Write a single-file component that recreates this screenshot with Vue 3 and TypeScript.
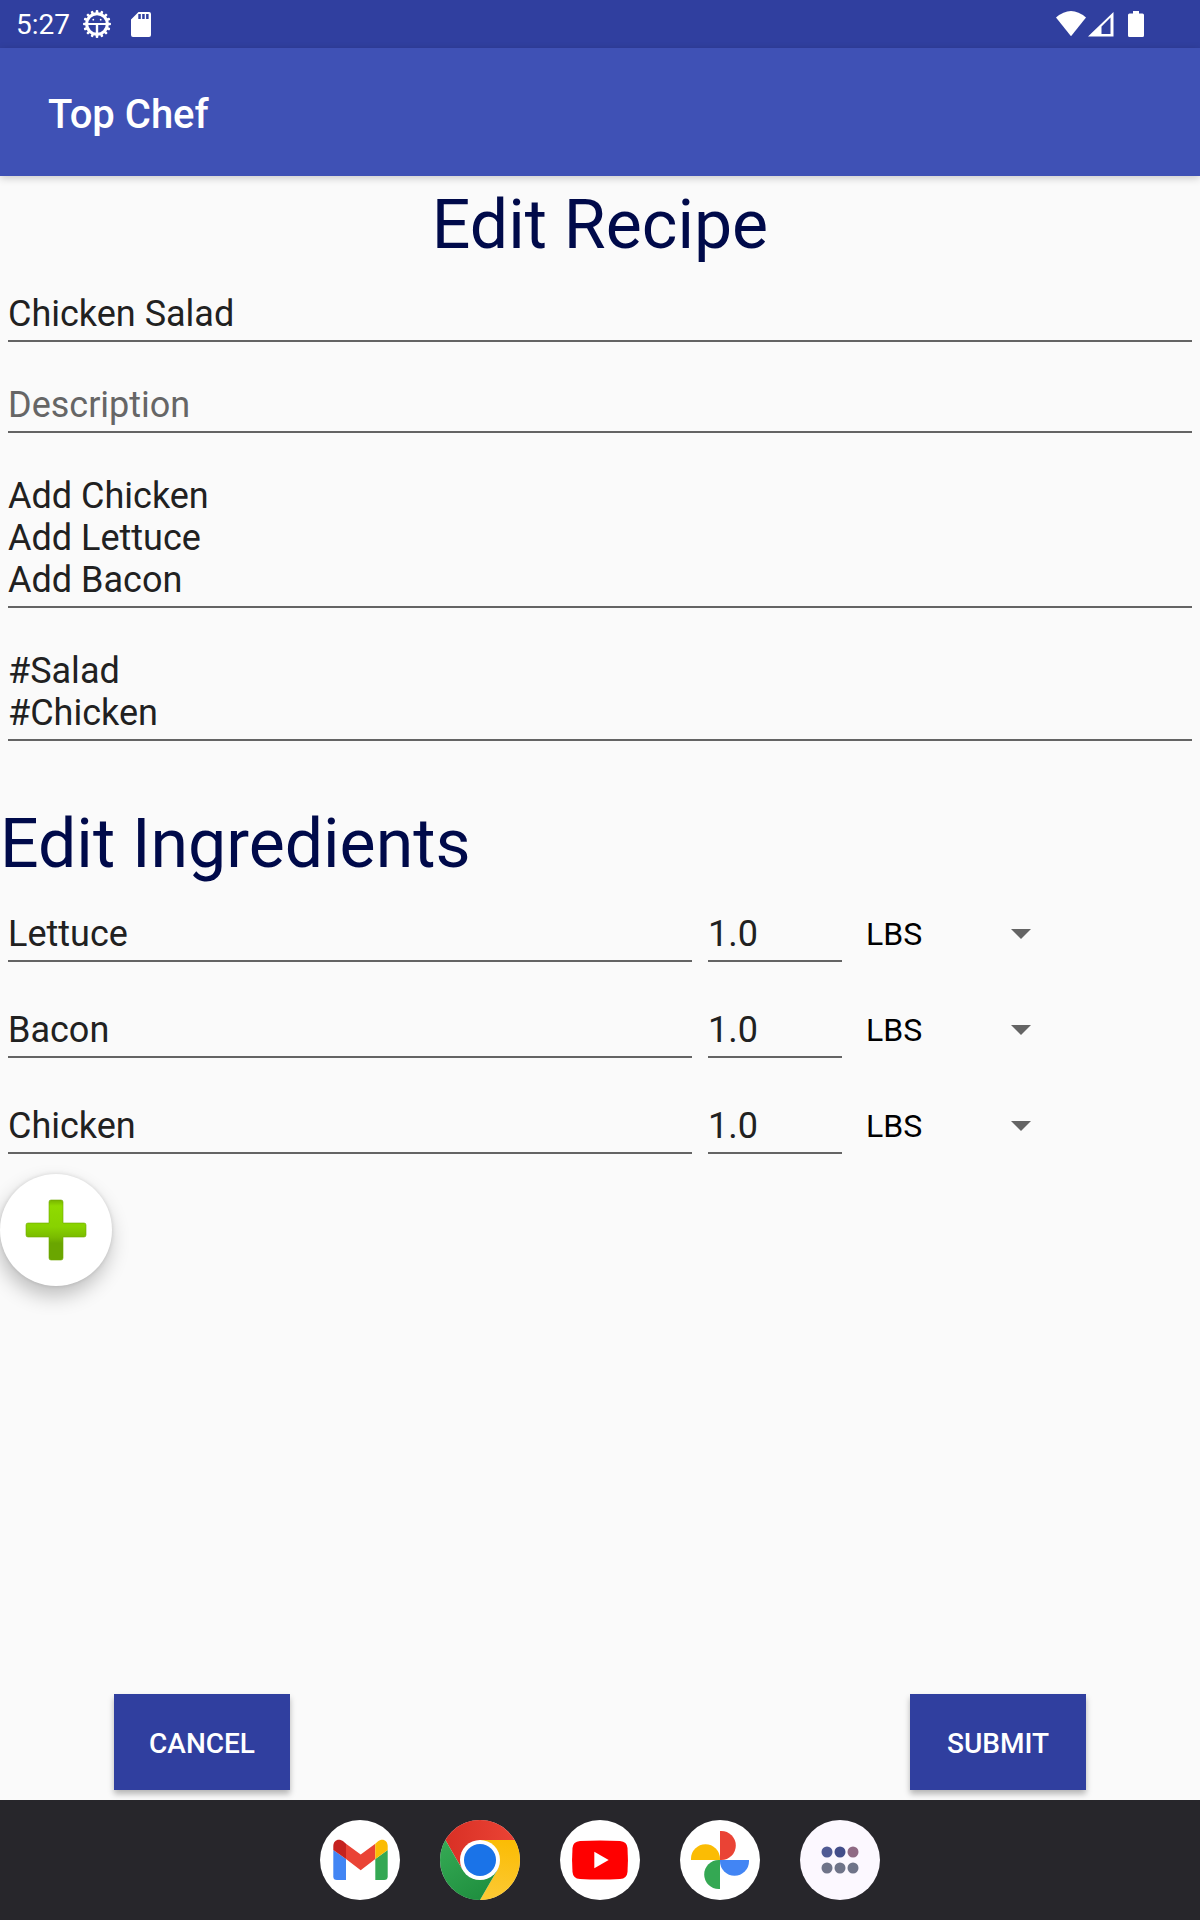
<script setup lang="ts">
import { ref } from 'vue'

interface Ingredient {
  id: number
  name: string
  quantity: string
  unit: string
}

const units = ['LBS', 'OZ', 'CUPS', 'TSP', 'TBSP']

const title = ref('Chicken Salad')
const description = ref('')
const steps = ref('Add Chicken\nAdd Lettuce\nAdd Bacon')
const tags = ref('#Salad\n#Chicken')
const ingredients = ref<Ingredient[]>([
  { id: 1, name: 'Lettuce', quantity: '1.0', unit: 'LBS' },
  { id: 2, name: 'Bacon', quantity: '1.0', unit: 'LBS' },
  { id: 3, name: 'Chicken', quantity: '1.0', unit: 'LBS' },
])

function addIngredient(): void {
  ingredients.value.push({ id: ingredients.value.length + 1, name: '', quantity: '', unit: 'LBS' })
}

const teeth = Array.from({ length: 16 }, (_, i) => i * 22.5)
const appDots = [
  { x: 27, y: 32, color: '#505b94' },
  { x: 40, y: 32, color: '#434e8a' },
  { x: 53, y: 32, color: '#8f6a84' },
  { x: 27, y: 48, color: '#6f7489' },
  { x: 40, y: 48, color: '#6f7489' },
  { x: 53, y: 48, color: '#6f7489' },
]
</script>

<template>
  <div class="screen">
    <div class="status">
      <span class="clock">5:27</span>
      <svg class="gear" width="28" height="28" viewBox="0 0 28 28" aria-hidden="true">
        <circle cx="14" cy="14" r="10.300" fill="none" stroke="#fff" stroke-width="3" />
        <rect v-for="angle in teeth" :key="angle" x="12.700" y="0" width="2.600" height="4" rx="1" fill="#fff" :transform="`rotate(${angle} 14 14)`" />
        <path d="M4 13H24V15H15.200V24H12.800V15H4Z" fill="#fff" />
        <circle cx="10.300" cy="9.700" r=".9" fill="#fff" />
        <circle cx="17.700" cy="9.700" r=".9" fill="#fff" />
      </svg>
      <svg class="card" width="20" height="25" viewBox="0 0 20 25" aria-hidden="true">
        <path d="M7.500 0H18Q20 0 20 2V23Q20 25 18 25H2Q0 25 0 23V7.500ZM7.300 2V7H9.800V2ZM11.200 2V7H13.700V2ZM15.100 2V7H17.600V2Z" fill="#fff" fill-rule="evenodd" />
      </svg>
      <div class="signals">
        <svg width="30" height="26" viewBox="0 0 30 26" aria-hidden="true">
          <path d="M0 6.500Q15-6.500 30 6.500L15 25.300Z" fill="#fff" />
        </svg>
        <svg class="cell" width="26" height="26" viewBox="0 0 26 26" aria-hidden="true">
          <path d="M0 25.500 25.500 1V25.500ZM13.500 15.500V23H22.500V6.500Z" fill="#fff" fill-rule="evenodd" />
        </svg>
        <svg class="battery" width="16" height="26" viewBox="0 0 16 26" aria-hidden="true">
          <path d="M5 0H11V2.500H14.500Q16 2.500 16 4V24.500Q16 26 14.500 26H1.500Q0 26 0 24.500V4Q0 2.500 1.500 2.500H5Z" fill="#fff" />
        </svg>
      </div>
    </div>

    <header class="appbar"><span class="app-title">Top Chef</span></header>

    <form class="form" @submit.prevent>
      <h1 class="heading centered">Edit Recipe</h1>
      <div class="fields">
        <input v-model="title" class="field" type="text" placeholder="Title" aria-label="Title" />
        <input v-model="description" class="field" type="text" placeholder="Description" aria-label="Description" />
        <textarea v-model="steps" class="field" rows="3" placeholder="Instructions" aria-label="Instructions"></textarea>
        <textarea v-model="tags" class="field" rows="2" placeholder="Tags" aria-label="Tags"></textarea>
      </div>

      <h2 class="heading section">Edit Ingredients</h2>
      <div class="ingredients">
        <div v-for="item in ingredients" :key="item.id" class="ingredient">
          <input v-model="item.name" class="field name" type="text" aria-label="Ingredient" />
          <input v-model="item.quantity" class="field quantity" type="text" inputmode="decimal" aria-label="Quantity" />
          <div class="unit">
            <select v-model="item.unit" aria-label="Unit">
              <option v-for="unit in units" :key="unit" :value="unit">{{ unit }}</option>
            </select>
            <svg class="arrow" width="20" height="10" viewBox="0 0 20 10" aria-hidden="true">
              <path d="M0 0H20L10 10Z" fill="#646464" />
            </svg>
          </div>
        </div>
      </div>

      <button class="fab" type="button" aria-label="Add ingredient" @click="addIngredient">
        <svg width="64" height="64" viewBox="0 0 64 64" aria-hidden="true">
          <defs>
            <linearGradient id="plus-fill" x1="0" y1="0" x2="0" y2="1">
              <stop offset="0" stop-color="#78b400" />
              <stop offset=".1" stop-color="#90da00" />
              <stop offset=".45" stop-color="#88d200" />
              <stop offset=".62" stop-color="#7abb00" />
              <stop offset=".72" stop-color="#6aa600" />
              <stop offset="1" stop-color="#6aa600" />
            </linearGradient>
          </defs>
          <path d="M27 2H37Q39 2 39 4V25H60Q62 25 62 27V37Q62 39 60 39H39V60Q39 62 37 62H27Q25 62 25 60V39H4Q2 39 2 37V27Q2 25 4 25H25V4Q25 2 27 2Z" fill="url(#plus-fill)" stroke="#6ea600" stroke-opacity=".6" />
        </svg>
      </button>

      <div class="actions">
        <button class="action" type="button">CANCEL</button>
        <button class="action" type="submit">SUBMIT</button>
      </div>
    </form>

    <nav class="dock" aria-label="Apps">
      <button class="app" type="button" aria-label="Gmail">
        <svg viewBox="0 0 80 80" aria-hidden="true">
          <path d="M13.300 30 26 39V60H17Q13.300 60 13.300 56.500Z" fill="#4285f4" />
          <path d="M67.700 30 55.300 39V60H64Q67.700 60 67.700 56.500Z" fill="#34a853" />
          <path d="M26 23.700 40.700 34.500 55.300 23.700V39L40.700 50.200 26 39Z" fill="#ea4335" />
          <path d="M26 39 13.300 30V26C13.300 20 19 17.800 23.500 21.500L26 23.700Z" fill="#c5221f" />
          <path d="M55.300 39 67.700 30V26C67.700 20 62 17.800 57.800 21.500L55.300 23.700Z" fill="#fbbc04" />
        </svg>
      </button>
      <button class="app" type="button" aria-label="Chrome">
        <svg viewBox="0 0 80 80" aria-hidden="true">
          <defs>
            <linearGradient id="chrome-red" x1="0" x2="1"><stop offset="0" stop-color="#d93025" /><stop offset="1" stop-color="#ea4335" /></linearGradient>
            <linearGradient id="chrome-yellow" x1=".5" y1="1" x2=".6" y2="0"><stop offset="0" stop-color="#fcc934" /><stop offset="1" stop-color="#fbbc04" /></linearGradient>
            <linearGradient id="chrome-green" x1=".8" y1="1" x2=".2" y2="0"><stop offset="0" stop-color="#1e8e3e" /><stop offset="1" stop-color="#34a853" /></linearGradient>
          </defs>
          <path d="M5.360 20A40 40 0 0 1 74.640 20H40L22.680 50Z" fill="url(#chrome-red)" />
          <path d="M74.640 20A40 40 0 0 1 40 80L57.320 50 40 20Z" fill="url(#chrome-yellow)" />
          <path d="M40 80A40 40 0 0 1 5.360 20L22.680 50H57.320Z" fill="url(#chrome-green)" />
          <circle cx="40" cy="40" r="20" fill="#fff" />
          <circle cx="40" cy="40" r="16" fill="#1a73e8" />
        </svg>
      </button>
      <button class="app" type="button" aria-label="YouTube">
        <svg viewBox="0 0 80 80" aria-hidden="true">
          <path d="M20 21Q40 20 60 21Q67 21.500 67.500 28Q68.400 40 67.500 52Q67 58.500 60 59Q40 60 20 59Q13 58.500 12.500 52Q11.600 40 12.500 28Q13 21.500 20 21Z" fill="#f00" />
          <path d="M34.300 31.700 48.700 40 34.300 48.300Z" fill="#fff" />
        </svg>
      </button>
      <button class="app" type="button" aria-label="Photos">
        <svg viewBox="0 0 80 80" aria-hidden="true">
          <path d="M40 11H41.300A14.500 14.500 0 0 1 41.300 40H40Z" fill="#ea4335" />
          <path d="M69 40V41.300A14.500 14.500 0 0 1 40 41.300V40Z" fill="#4285f4" />
          <path d="M40 69H38.700A14.500 14.500 0 0 1 38.700 40H40Z" fill="#34a853" />
          <path d="M11 40V38.700A14.500 14.500 0 0 1 40 38.700V40Z" fill="#fbbc04" />
        </svg>
      </button>
      <button class="app drawer" type="button" aria-label="All apps">
        <svg viewBox="0 0 80 80" aria-hidden="true">
          <circle v-for="dot in appDots" :key="`${dot.x}-${dot.y}`" :cx="dot.x" :cy="dot.y" r="5.500" :fill="dot.color" />
        </svg>
      </button>
    </nav>
  </div>
</template>

<style>
body {
  margin: 0;
  background: #fafafa;
}
</style>

<style scoped>
.screen {
  display: flex;
  flex-direction: column;
  min-height: 100vh;
  background: #fafafa;
  color: #212121;
  font-family: Roboto, sans-serif;
}

svg {
  display: block;
}

button {
  padding: 0;
  border: 0;
  font-family: inherit;
}

.status {
  display: flex;
  align-items: center;
  box-sizing: border-box;
  height: 48px;
  padding: 0 56px 0 16px;
  background: #303f9f;
  color: #fff;
}

.clock {
  padding-top: 2px;
  font-size: 28px;
  line-height: 32px;
}

.gear {
  margin-left: 13px;
}

.card {
  margin-left: 20px;
}

.signals {
  display: flex;
  margin-left: auto;
}

.cell {
  margin-left: 2px;
}

.battery {
  margin-left: 14px;
}

.appbar {
  display: flex;
  align-items: center;
  box-sizing: border-box;
  height: 128px;
  padding: 6px 48px 0;
  background: #3f51b5;
  box-shadow: 0 2px 8px rgba(0, 0, 0, 0.2);
  color: #fff;
}

.app-title {
  font-size: 40px;
  font-weight: 500;
  line-height: 48px;
}

.form {
  display: flex;
  flex: 1;
  flex-direction: column;
  padding: 9px 0 10px;
}

.heading {
  margin: 0;
  color: #000a4a;
  font-size: 68px;
  font-weight: 400;
  line-height: 80px;
}

.centered {
  text-align: center;
}

.section {
  margin-top: 63px;
}

.fields {
  display: flex;
  flex-direction: column;
  gap: 42px;
  margin-top: 28px;
  padding: 0 8px;
}

.field {
  display: block;
  box-sizing: content-box;
  min-width: 0;
  height: 42px;
  margin: 0;
  padding: 0 0 5px;
  overflow: hidden;
  border: 0;
  border-bottom: 2px solid #646464;
  border-radius: 0;
  outline: 0;
  background: transparent;
  color: #212121;
  font: 400 36px/42px Roboto, sans-serif;
  resize: none;
}

textarea.field {
  height: auto;
}

.field::placeholder {
  color: #666;
  opacity: 1;
}

.ingredients {
  display: flex;
  flex-direction: column;
  gap: 47px;
  margin-top: 29px;
  padding: 0 158px 0 8px;
}

.ingredient {
  display: flex;
}

.name {
  flex: 1;
}

.quantity {
  width: 134px;
  margin-left: 16px;
}

.unit {
  display: grid;
  align-items: center;
  width: 176px;
  height: 42px;
  margin-left: 24px;
}

.unit select,
.arrow {
  grid-area: 1 / 1;
}

.unit select {
  height: 42px;
  margin: 0;
  padding: 0;
  border: 0;
  outline: 0;
  appearance: none;
  background: transparent;
  color: #000;
  font: 400 32px/42px Roboto, sans-serif;
}

.arrow {
  justify-self: end;
  margin-right: 11px;
  pointer-events: none;
}

.fab {
  display: grid;
  place-items: center;
  width: 112px;
  height: 112px;
  margin-top: 20px;
  border-radius: 50%;
  background: #fff;
  box-shadow: -2px 10px 20px rgba(0, 0, 0, 0.24), 0 0 4px rgba(0, 0, 0, 0.12);
}

.actions {
  display: flex;
  justify-content: space-between;
  margin-top: auto;
  padding: 0 114px;
}

.action {
  width: 176px;
  height: 96px;
  padding-top: 2px;
  background: #303f9f;
  box-shadow: 0 4px 6px rgba(0, 0, 0, 0.28);
  color: #fff;
  font-size: 28px;
  font-weight: 500;
}

.dock {
  display: flex;
  align-items: center;
  justify-content: center;
  gap: 40px;
  height: 120px;
  background: #27262b;
}

.app {
  width: 80px;
  height: 80px;
  border-radius: 50%;
  background: #fff;
}

.drawer {
  background: #fcf8ff;
}
</style>
